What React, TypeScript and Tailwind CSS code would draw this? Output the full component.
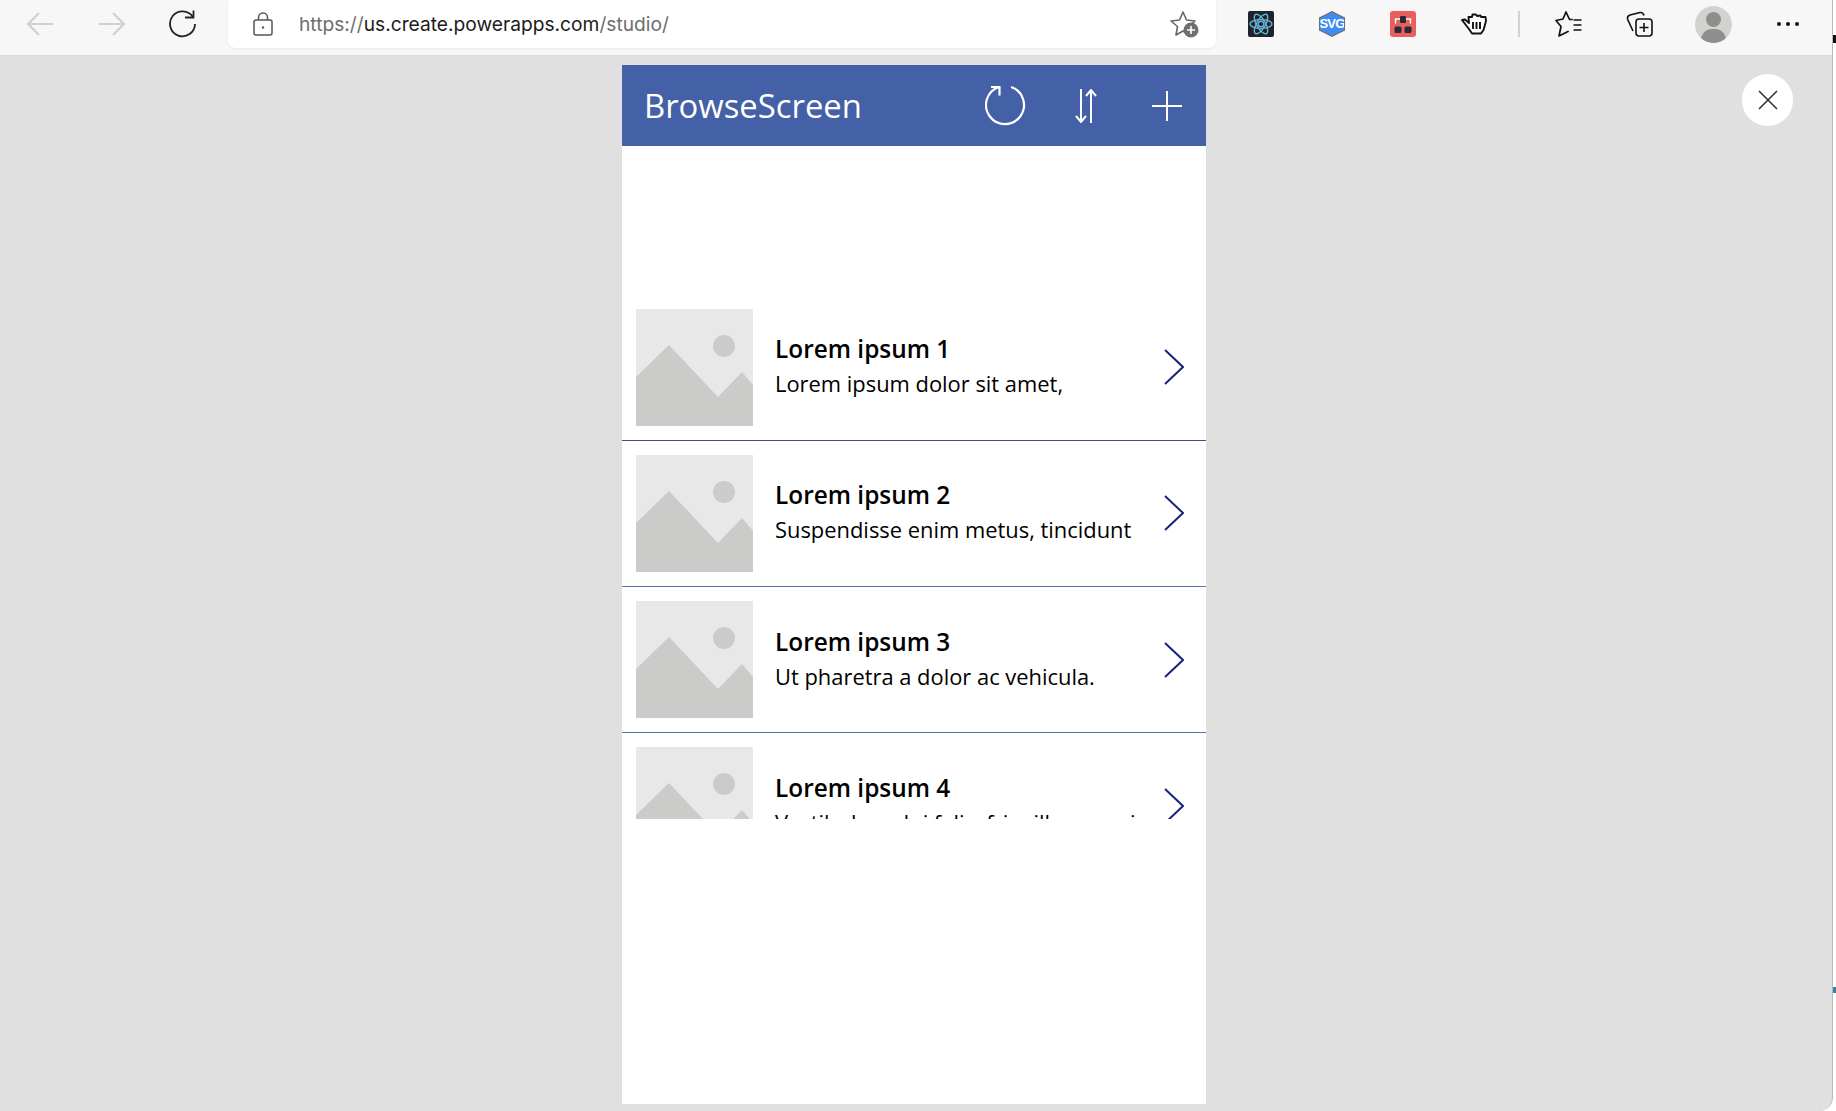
const rows = [
  { title: "Lorem ipsum 1", text: "Lorem ipsum dolor sit amet,", line: "border-[#3f4f96]" },
  { title: "Lorem ipsum 2", text: "Suspendisse enim metus, tincidunt", line: "border-[#5a6fb0]" },
  { title: "Lorem ipsum 3", text: "Ut pharetra a dolor ac vehicula.", line: "border-[#5a6fb0]" },
  { title: "Lorem ipsum 4", text: "Vestibulum dui felis, fringilla nec mi", line: "border-transparent" },
]

function Placeholder() {
  return (
    <svg width="117" height="117" viewBox="0 0 117 117" className="shrink-0">
      <rect width="117" height="117" fill="#e8e8e8" />
      <circle cx="88" cy="37" r="11" fill="#cbcbc9" />
      <path d="M0 68 L33 36 L82 88 L106 63 L117 76 V117 H0 Z" fill="#cbcbc9" />
    </svg>
  )
}

function Row({ title, text, line }: { title: string; text: string; line: string }) {
  return (
    <div className={`flex h-[146.2px] shrink-0 items-center border-b pl-[14px] ${line}`}>
      <Placeholder />
      <div className="ml-[22px] flex w-[389px] flex-col gap-[1px] pb-[1px] whitespace-nowrap font-['Open_Sans',sans-serif] text-black">
        <div className="text-[24.4px] leading-[34px] font-semibold">{title}</div>
        <div className="text-[21.9px] leading-[34px]">{text}</div>
      </div>
      <svg width="20" height="36" viewBox="0 0 20 36" fill="none" stroke="#16237d" strokeWidth="2">
        <path d="M1 1 L19 18 L1 35" />
      </svg>
    </div>
  )
}

function Toolbar() {
  return (
    <div className="flex h-[56px] shrink-0 items-start border-b border-[#dadada] bg-[#f7f7f7]">
      <div className="flex h-[48px] items-center pl-[27px]">
        <svg width="26" height="24" viewBox="0 0 26 24" fill="none" stroke="#cfcfcf" strokeWidth="2">
          <path d="M26 12 H1 M12 1 L1 12 L12 23" />
        </svg>
        <svg width="26" height="24" viewBox="0 0 26 24" fill="none" stroke="#cfcfcf" strokeWidth="2" className="ml-[46px]">
          <path d="M0 12 H25 M14 1 L25 12 L14 23" />
        </svg>
        <svg width="28" height="28" viewBox="0 0 28 28" fill="none" stroke="#222" strokeWidth="1.8" className="ml-[43px]">
          <path d="M25 7 A12.5 12.5 0 1 0 27 14" />
          <path d="M17 7.5 H25.5 V0.5" />
        </svg>
      </div>
      <div className="ml-[32px] flex h-[48px] w-[988px] items-center rounded-b-[8px] bg-white pl-[25px] shadow-[0_1px_3px_rgba(0,0,0,0.06)]">
        <svg width="20" height="24" viewBox="0 0 20 24" fill="none" stroke="#555" strokeWidth="1.5">
          <rect x="1" y="8" width="18" height="15" rx="2" />
          <path d="M5.5 8 V5.5 A4.5 4.5 0 0 1 14.5 5.5 V8" />
          <circle cx="10" cy="15.5" r="1.2" fill="#555" stroke="none" />
        </svg>
        <div className="ml-[26px] font-['Inter',sans-serif] text-[19.2px] whitespace-nowrap text-[#6e6e6e]">
          https://<span className="text-[#1c1c1c]">us.create.powerapps.com</span>/studio/
        </div>
        <svg width="30" height="28" viewBox="0 0 30 28" fill="none" className="ml-auto mr-[16px]">
          <path d="M13 2 L16.5 10 L25 11 L18.5 16.5 L20 25 L13 21 L6 25 L7.5 16.5 L1 11 L9.5 10 Z" stroke="#666" strokeWidth="1.6" strokeLinejoin="round" />
          <circle cx="21" cy="20" r="7.5" fill="#6f6f6f" />
          <path d="M21 16 V24 M17 20 H25" stroke="#fff" strokeWidth="1.6" />
        </svg>
      </div>
      <div className="flex h-[48px] items-center">
        <svg width="26" height="26" viewBox="0 0 26 26" fill="none" className="ml-[32px]">
          <rect width="26" height="26" rx="2" fill="#20232a" />
          <g stroke="#61b5d8" strokeWidth="1.4">
            <ellipse cx="13" cy="13" rx="11" ry="4.4" />
            <ellipse cx="13" cy="13" rx="11" ry="4.4" transform="rotate(60 13 13)" />
            <ellipse cx="13" cy="13" rx="11" ry="4.4" transform="rotate(120 13 13)" />
            <circle cx="13" cy="13" r="2.8" />
          </g>
        </svg>
        <div className="ml-[45px] flex h-[26px] w-[26px] items-center justify-center bg-[#6b7075] [clip-path:polygon(50%_0,100%_25%,100%_75%,50%_100%,0_75%,0_25%)]">
          <div className="flex h-[23px] w-[24px] items-center justify-center bg-[#3f8df0] font-['Liberation_Sans',sans-serif] text-[13px] font-bold tracking-[-0.8px] text-white [clip-path:polygon(50%_0,100%_25%,100%_75%,50%_100%,0_75%,0_25%)]">
            SVG
          </div>
        </div>
        <svg width="26" height="26" viewBox="0 0 26 26" fill="none" className="ml-[45px]">
          <rect width="26" height="26" rx="3" fill="#ea5e5e" />
          <rect x="10" y="5" width="6" height="7" rx="1.2" fill="#262b36" />
          <rect x="4.5" y="15.5" width="7" height="6.5" rx="1.5" fill="#262b36" />
          <rect x="14.5" y="15.5" width="7" height="6.5" rx="1.5" fill="#262b36" />
          <path d="M10 8 H5.5 V12.5 M16 8 H20.5 V12.5" stroke="#fff" strokeWidth="1.4" />
        </svg>
        <svg width="26" height="22" viewBox="0 0 26 22" fill="none" stroke="#111" strokeWidth="1.9" strokeLinejoin="round" className="ml-[45px]">
          <path d="M1 7 L4 6.5 L8 10 L7.5 4 L11 4 L11.5 1.5 L15 1.5 L16 3 L19.5 2.5 L20 4 L24.5 4 L25 8 L22.5 17 L20 20.5 L11 20.5 L8 16 Z" fill="#fff" />
          <path d="M12 9 V16 M15.5 9 V16 M19 9 V16" />
        </svg>
        <div className="ml-[31px] h-[26px] w-[2px] bg-[#d2d2d2]" />
        <svg width="27" height="26" viewBox="0 0 27 26" fill="none" stroke="#111" strokeWidth="1.7" strokeLinejoin="round" strokeLinecap="round" className="ml-[35px]">
          <path d="M17 8.5 H14.5 L11 1 L8 8 L1 9.5 L6 15.5 L4 25 L13 20.5" />
          <path d="M18.5 9 H26.5 M18.5 14 H26.5 M18.5 19 H26.5" strokeLinecap="butt" />
        </svg>
        <svg width="27" height="26" viewBox="0 0 27 26" fill="none" stroke="#111" strokeWidth="1.6" className="ml-[44px]">
          <rect x="10" y="8" width="16" height="17" rx="3" />
          <path d="M18 12 V21 M13.5 16.5 H22.5" />
          <path d="M7 20 L1.5 8 Q1 5 4 4 L14 1.5 Q17 1 18 4.5" />
        </svg>
        <div className="relative ml-[42px] h-[37px] w-[37px] overflow-hidden rounded-full bg-[#d2d2ce]">
          <div className="absolute left-[11px] top-[6px] h-[15px] w-[15px] rounded-full bg-[#8e8e8c]" />
          <div className="absolute left-[6px] top-[23px] h-[22px] w-[25px] rounded-full bg-[#8e8e8c]" />
        </div>
        <div className="ml-[45px] flex gap-[5px]">
          <div className="h-[4px] w-[4px] rounded-full bg-[#111]" />
          <div className="h-[4px] w-[4px] rounded-full bg-[#111]" />
          <div className="h-[4px] w-[4px] rounded-full bg-[#111]" />
        </div>
      </div>
    </div>
  )
}

export default function App() {
  return (
    <div className="relative h-[1111px] w-[1836px] overflow-hidden bg-white">
      <div className="flex h-full w-[1833px] flex-col overflow-hidden rounded-br-[14px] border-r border-[#b8b8b8] bg-[#e0e0e0]">
        <Toolbar />
        <div className="relative flex-1 pl-[622px] pt-[9px]">
          <div className="flex h-[1039px] w-[584px] flex-col bg-white">
            <div className="flex h-[81px] shrink-0 items-center bg-[#4460a6] pl-[22px] text-white">
              <div className="w-[341px] font-['Open_Sans',sans-serif] text-[32.8px]">BrowseScreen</div>
              <svg width="42" height="42" viewBox="0 0 42 42" fill="none" stroke="#fff" strokeWidth="2.2">
                <path d="M26 2 A19 19 0 1 1 14 2" />
                <path d="M6 2 H14.5 V10.5" />
              </svg>
              <svg width="22" height="34" viewBox="0 0 22 34" fill="none" stroke="#fff" strokeWidth="2" className="ml-[48px]">
                <path d="M6 0 V33 M1 27 L6 33 L11 27" />
                <path d="M16 34 V1 M11 7 L16 1 L21 7" />
              </svg>
              <svg width="30" height="30" viewBox="0 0 30 30" fill="none" stroke="#fff" strokeWidth="2" className="ml-[55px]">
                <path d="M15 0 V30 M0 15 H30" />
              </svg>
            </div>
            <div className="h-[148.6px] shrink-0" />
            <div className="flex h-[524.9px] shrink-0 flex-col overflow-hidden">
              {rows.map((r) => (
                <Row key={r.title} {...r} />
              ))}
            </div>
          </div>
          <button className="absolute left-[1742px] top-[18px] flex h-[52px] w-[51px] items-center justify-center rounded-full bg-white">
            <svg width="20" height="20" viewBox="0 0 20 20" fill="none" stroke="#333" strokeWidth="1.6">
              <path d="M1 1 L19 19 M19 1 L1 19" />
            </svg>
          </button>
        </div>
      </div>
      <div className="absolute left-[1833px] top-[35px] h-[8px] w-[3px] bg-[#111]" />
      <div className="absolute left-[1833px] top-[987px] h-[6px] w-[3px] bg-[#3f7fa0]" />
    </div>
  )
}
